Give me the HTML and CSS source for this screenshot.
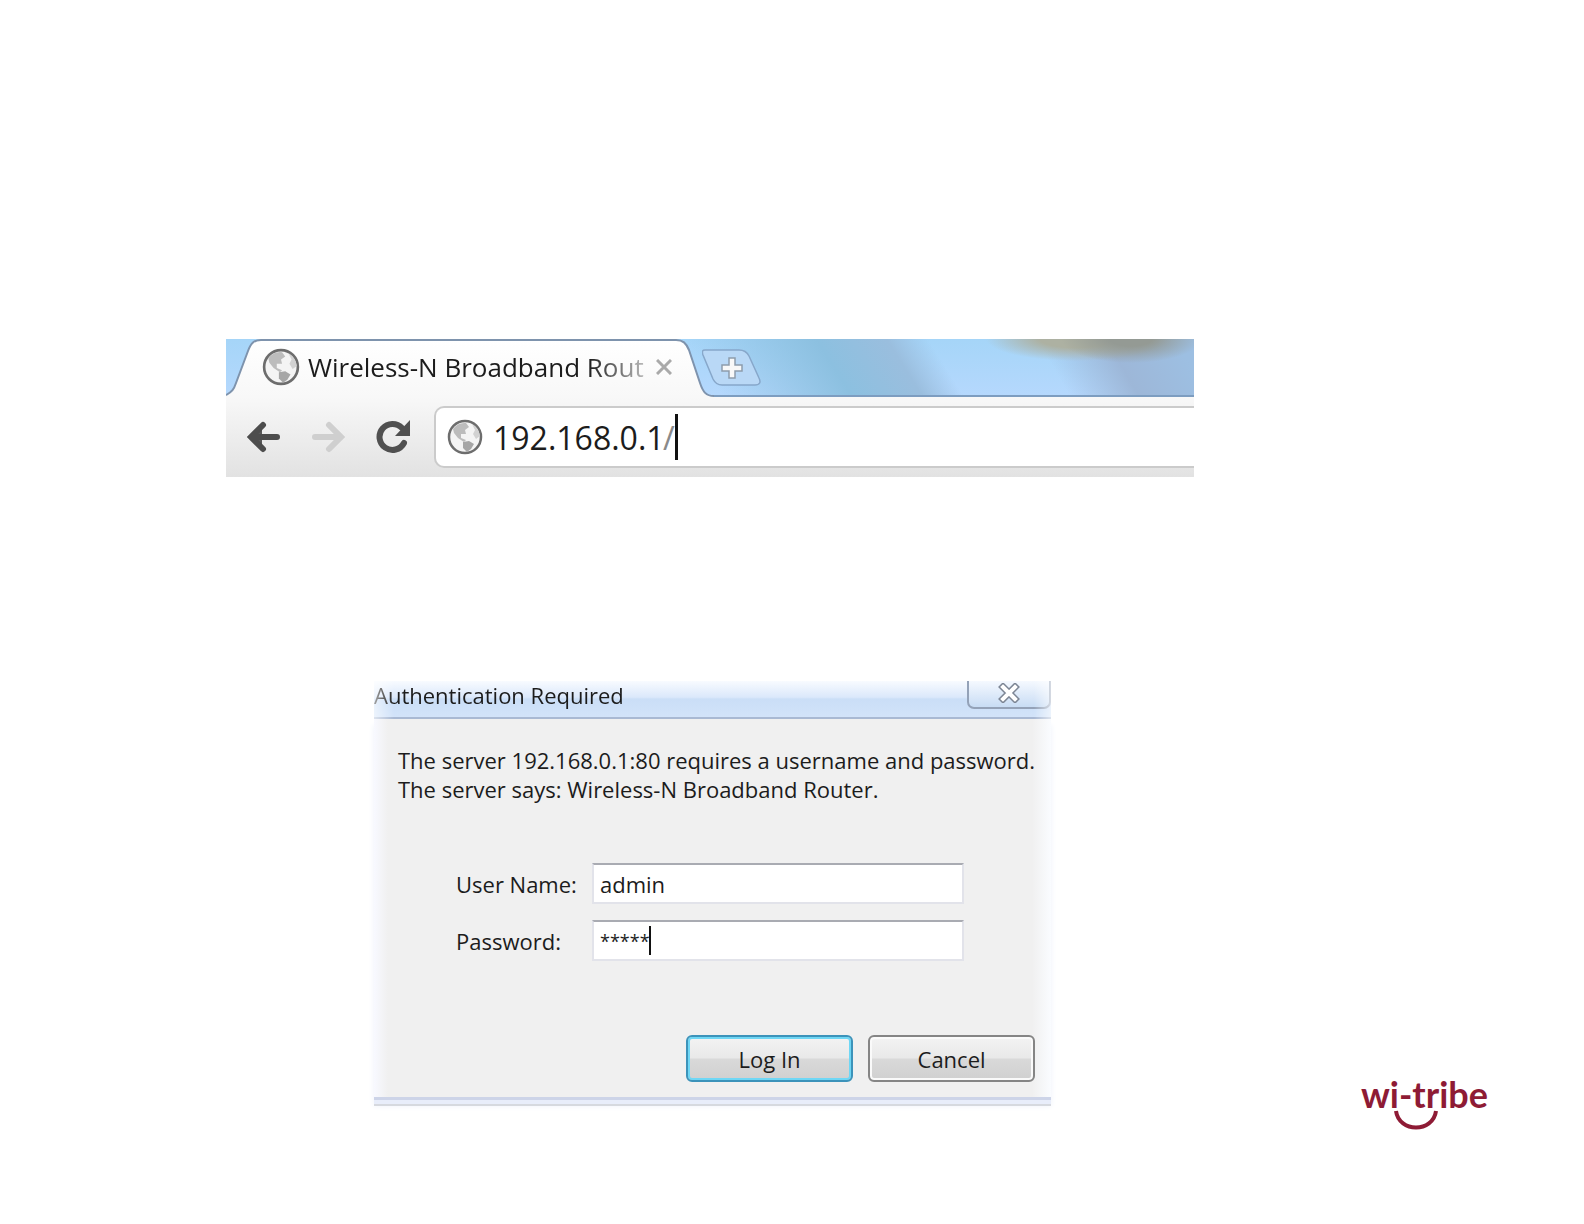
FILE: index.html
```html
<!DOCTYPE html>
<html lang="en">
<head>
  <meta charset="UTF-8">
  <title>Router login</title>
  <link rel="stylesheet" href="styles.css">
</head>
<body>
  <svg class="sprite" aria-hidden="true">
    <symbol id="globe" viewBox="0 0 36 36">
      <circle cx="18" cy="18" r="16" fill="#f4f4f4" stroke="#6d6d6d" stroke-width="2.5"/>
      <path d="M6 10 Q11 3 19 4 L22 8 L18 11 L19 15 L14 15 L14 19 L19 21 L17 23 L11 19 L7 14 Z" fill="#bcbcbc"/>
      <path d="M25 5 Q32 9 33 17 L29 20 L26 15 L28 11 Z" fill="#d2d2d2"/>
      <path d="M16 23 L22 22 L27 25 L24 30 L20 33 L16 29 Z" fill="#a6a6a6"/>
    </symbol>
  </svg>

  <main class="page">
    <section class="browser">
      <div class="tab-strip">
        <svg class="tab-shape" width="490" height="58" viewBox="0 0 490 58" aria-hidden="true">
          <defs>
            <linearGradient id="tabFill" x1="0" y1="0" x2="0" y2="1">
              <stop offset="0" stop-color="#ffffff"/>
              <stop offset="1" stop-color="#f8f8f8"/>
            </linearGradient>
          </defs>
          <path d="M0 58 V56 C6 53 8 50 10 44 L22 12 C25 4 28 1 35 1 H450 C457 1 460 4 463 11 L474 44 C477 53 480 57 488 57 V58 Z" fill="url(#tabFill)"/>
          <path d="M0 56 C6 53 8 50 10 44 L22 12 C25 4 28 1 35 1 H450 C457 1 460 4 463 11 L474 44 C477 53 480 57 488 57" fill="none" stroke="#7e93ad" stroke-width="2"/>
        </svg>
        <div class="tab">
          <svg class="tab-icon"><use href="#globe"/></svg>
          <span class="tab-title">Wireless-N Broadband Rout</span>
          <button class="tab-close" aria-label="Close tab">
            <svg width="16" height="16" viewBox="0 0 16 16"><path d="M1 1 L15 15 M15 1 L1 15" stroke="#a9a9a9" stroke-width="3"/></svg>
          </button>
        </div>
        <button class="new-tab" aria-label="New tab">
          <svg width="60" height="37" viewBox="0 0 60 37">
            <path d="M3 1 H37 C42 1 45 3 47 7 L57 29 C59 33 58 36 53 36 H20 C15 36 13 34 11 30 L1 6 C0 3 0 1 3 1 Z" fill="#b9d8f6" stroke="#87a7ca" stroke-width="1.5"/>
            <path d="M27 9 H33 V16 H40 V22 H33 V29 H27 V22 H20 V16 H27 Z" fill="#f8f8f8" stroke="#8d9cac" stroke-width="1.5"/>
          </svg>
        </button>
      </div>

      <div class="toolbar">
        <button class="nav-btn" aria-label="Back">
          <svg width="34" height="32" viewBox="0 0 34 32"><path d="M4 16 L16 5 V27 Z" fill="#5a5a5a"/><path d="M31 16 H7 M17 4 L5 16 L17 28" fill="none" stroke="#4d4d4d" stroke-width="6" stroke-linecap="round"/></svg>
        </button>
        <button class="nav-btn" aria-label="Forward">
          <svg width="34" height="32" viewBox="0 0 34 32"><path d="M4 16 H28 M18 4 L30 16 L18 28" fill="none" stroke="#cfcfcf" stroke-width="6" stroke-linecap="round"/></svg>
        </button>
        <button class="nav-btn" aria-label="Reload">
          <svg width="34" height="34" viewBox="0 0 34 34"><path d="M28 23 A13 13 0 1 1 26 8" fill="none" stroke="#505050" stroke-width="6" stroke-linecap="round"/><path d="M34 0 V16 H19 Z" fill="#505050"/></svg>
        </button>
        <div class="omnibox">
          <svg class="site-icon"><use href="#globe"/></svg>
          <input class="url" type="text" value="192.168.0.1" aria-label="Address">
          <span class="slash">/</span>
          <span class="caret"></span>
        </div>
      </div>
    </section>

    <div class="row">
      <section class="dialog">
        <header class="dialog-title">
          <h1>Authentication Required</h1>
          <button class="dialog-close" aria-label="Close">
            <svg width="24" height="20" viewBox="0 0 24 20" fill="none" stroke-linecap="square">
              <path d="M6 4 L18 16 M18 4 L6 16" stroke="#7d8695" stroke-width="7"/>
              <path d="M6 4 L18 16 M18 4 L6 16" stroke="#ffffff" stroke-width="4"/>
            </svg>
          </button>
        </header>
        <form class="dialog-body">
          <p>The server 192.168.0.1:80 requires a username and password.<br>The server says: Wireless-N Broadband Router.</p>
          <div class="fields">
            <label for="username">User Name:</label>
            <div class="field"><input type="text" id="username" value="admin"></div>
            <label for="password">Password:</label>
            <div class="field">
              <input type="text" id="password" class="masked" value="*****">
              <span class="field-caret"></span>
            </div>
          </div>
          <div class="actions">
            <button type="button" class="btn primary">Log In</button>
            <button type="button" class="btn">Cancel</button>
          </div>
        </form>
      </section>

      <div class="logo">
        <span>wi-tribe</span>
        <svg width="46" height="20" viewBox="0 0 46 20" aria-hidden="true"><path d="M3 1 C6 23 40 23 43 1" fill="none" stroke="#8e1b35" stroke-width="4"/></svg>
      </div>
    </div>
  </main>
</body>
</html>
```
FILE: styles.css
```css
* {
  box-sizing: border-box;
}

body {
  margin: 0;
  background: #fff;
  font-family: "Open Sans", "Noto Sans", sans-serif;
  color: #1c1c1c;
}

button {
  padding: 0;
  border: none;
  background: none;
  font: inherit;
  color: inherit;
  cursor: pointer;
}

button svg {
  display: block;
}

input {
  font: inherit;
  color: inherit;
}

.sprite {
  position: absolute;
  width: 0;
  height: 0;
}

.page {
  padding: 339px 96px 92px 226px;
}

/* Browser window */
.browser {
  margin-right: 294px;
}

.tab-strip {
  position: relative;
  display: flex;
  height: 58px;
  border-bottom: 2px solid #7d9dc0;
  background:
    radial-gradient(ellipse 70px 24px at 905px 0, #949a94 30%, transparent),
    radial-gradient(ellipse 90px 22px at 850px 0, #adb1a2 40%, transparent),
    linear-gradient(60deg, transparent 730px, #9db7d8 790px, #9dbfe2 850px),
    linear-gradient(58deg, transparent 420px, #8cc0e0 530px, #9abede 590px, transparent 625px),
    linear-gradient(#a5d5f8, #b5d8fd);
}

.tab-shape {
  position: absolute;
  left: 0;
  top: 0;
}

.tab {
  position: relative;
  display: flex;
  align-items: center;
  width: 476px;
  padding-left: 36px;
}

.tab-icon {
  width: 38px;
  height: 38px;
}

.tab-title {
  width: 336px;
  margin-left: 8px;
  overflow: hidden;
  white-space: nowrap;
  font-size: 26px;
  mask-image: linear-gradient(90deg, #000 280px, rgba(0, 0, 0, 0.3) 336px);
}

.tab-close {
  margin-left: 12px;
}

.new-tab {
  position: relative;
  align-self: center;
}

.toolbar {
  display: flex;
  align-items: center;
  height: 80px;
  padding-left: 20px;
  background: linear-gradient(#f8f8f8, #e2e2e2);
}

.nav-btn {
  width: 34px;
  margin-right: 31px;
}

.omnibox {
  flex: 1;
  display: flex;
  align-items: center;
  height: 62px;
  margin-left: -7px;
  padding-left: 11px;
  border: 2px solid #cbcbcb;
  border-right: none;
  border-radius: 10px 0 0 10px;
  background: #fff;
  font-size: 32px;
}

.site-icon {
  width: 36px;
  height: 36px;
}

.url {
  width: 170px;
  margin-left: 10px;
  padding: 0;
  border: none;
  outline: none;
}

.slash {
  color: #8a8a8a;
}

.caret {
  width: 3px;
  height: 46px;
  background: #111;
}

/* Login dialog */
.row {
  display: flex;
  align-items: flex-end;
  justify-content: space-between;
  margin: 204px 0 0 148px;
}

.dialog {
  flex: 0 1 674px;
  margin-bottom: 30px;
  font-size: 22px;
}

.dialog-title {
  display: flex;
  justify-content: space-between;
  height: 38px;
  border-bottom: 2px solid #a9b9d3;
  background: linear-gradient(#f8fbff, #dbe8fb 45%, #cadef7 50%, #d2e3f9);
  mask-image: linear-gradient(90deg, rgba(0, 0, 0, 0.4), #000 20px, #000 660px, rgba(0, 0, 0, 0.4));
}

.dialog-title h1 {
  margin: 0;
  font-size: 22px;
  font-weight: normal;
  line-height: 29px;
}

.dialog-close {
  display: flex;
  justify-content: center;
  width: 84px;
  height: 28px;
  padding-top: 2px;
  border: 2px solid #94a2b8;
  border-top: none;
  border-radius: 0 0 7px 7px;
  background: linear-gradient(#f5f9ff, #c8dcf4);
}

.dialog-body {
  padding: 27px 16px 15px 24px;
  border-bottom: 3px solid #cdd4e8;
  background: linear-gradient(90deg, #f8f9ff, #f0f0f0 14px, #f0f0f0 658px, #fafcff);
  box-shadow: 0 4px 0 #e8edfa, 0 6px 0 #d6d9df, 0 6px 6px #eef2fa;
}

.dialog-body p {
  margin: 0;
  line-height: 29px;
  white-space: nowrap;
}

.fields {
  display: grid;
  grid-template-columns: 136px 372px;
  row-gap: 16px;
  align-items: center;
  margin: 59px 0 0 58px;
}

.field {
  position: relative;
}

.field input {
  display: block;
  width: 100%;
  height: 41px;
  padding: 0 6px;
  border: 2px solid #e2e3ea;
  border-top-color: #a9abb2;
  background: #fff;
  outline: none;
}

.field .masked {
  font-size: 18px;
}

.field-caret {
  position: absolute;
  left: 57px;
  top: 6px;
  width: 2px;
  height: 29px;
  background: #111;
}

.actions {
  display: flex;
  justify-content: flex-end;
  gap: 15px;
  margin-top: 74px;
}

.btn {
  width: 167px;
  height: 47px;
  border: 2px solid #858585;
  border-radius: 6px;
  background: linear-gradient(#f3f3f3, #e9e9e9 48%, #d9d9d9 52%, #d0d0d0);
  box-shadow: inset 0 0 0 2px #fafafa;
}

.btn.primary {
  border-color: #3c93ba;
  box-shadow: inset 0 0 0 2px #6fd7f5;
}

/* Brand */
.logo {
  display: flex;
  flex-direction: column;
  color: #8e1b35;
  font-family: Lato, sans-serif;
  font-size: 36px;
  font-weight: bold;
  line-height: 36px;
}

.logo svg {
  margin: -2px 0 0 32px;
}
```
